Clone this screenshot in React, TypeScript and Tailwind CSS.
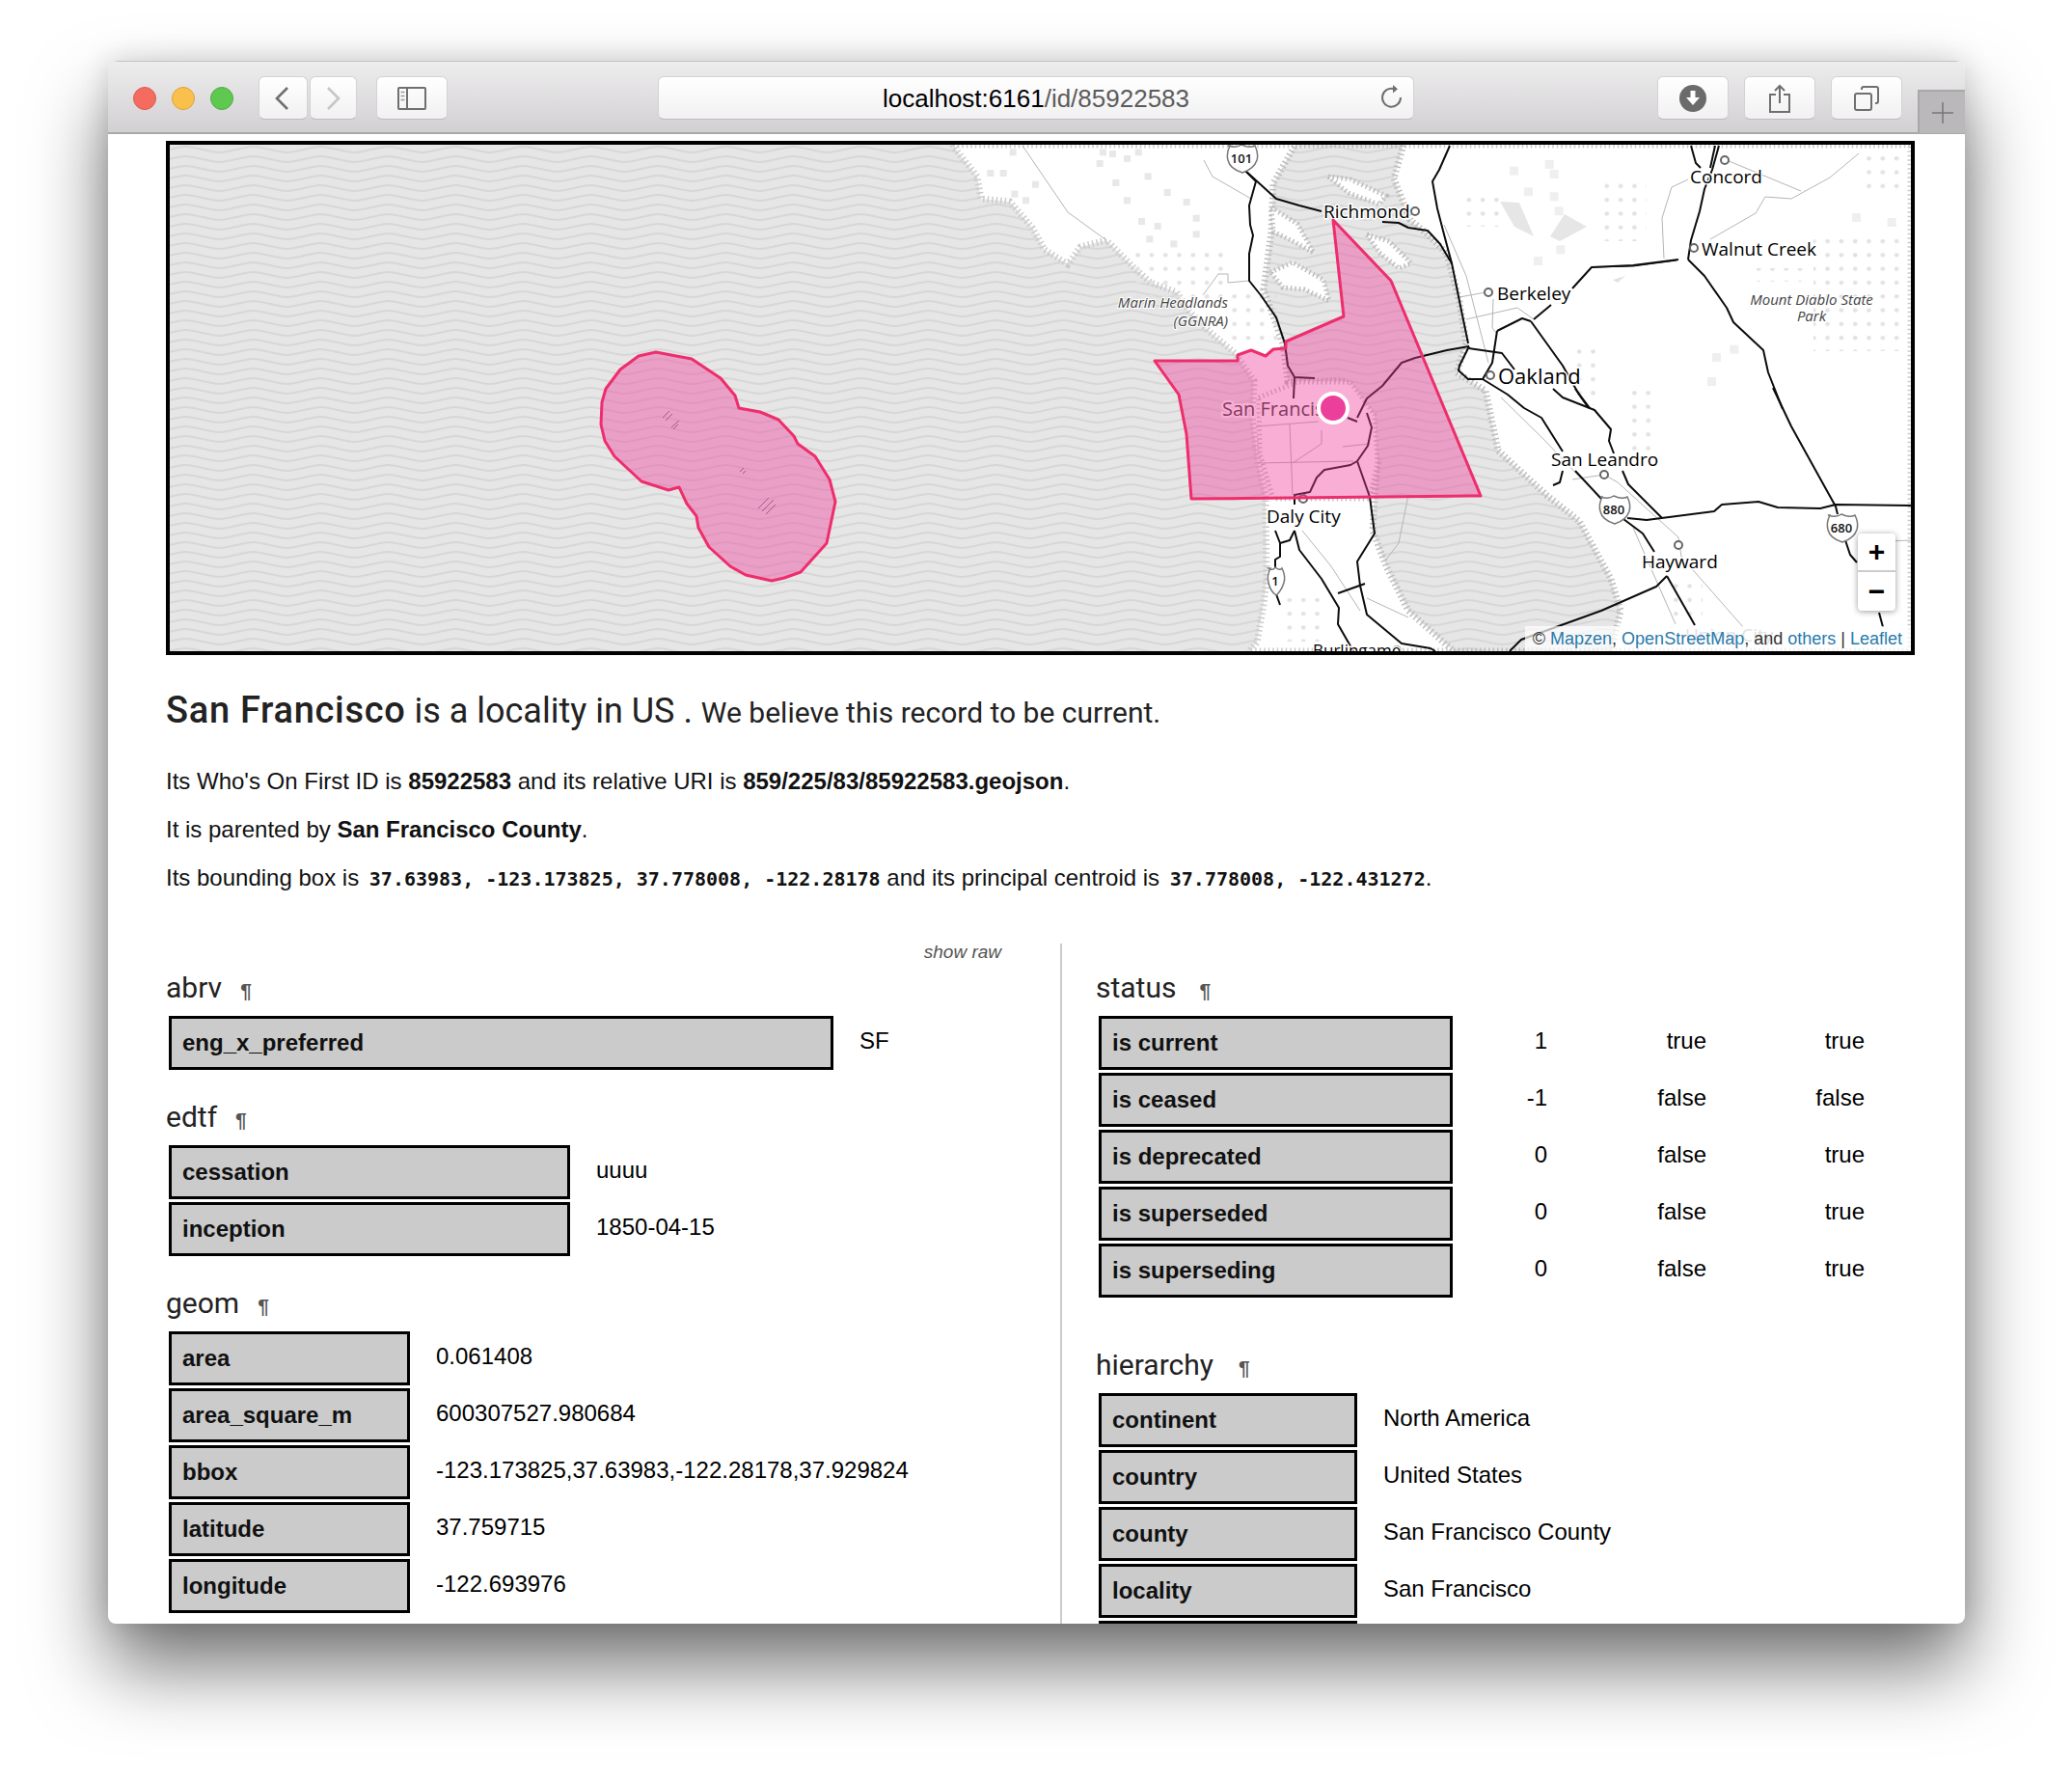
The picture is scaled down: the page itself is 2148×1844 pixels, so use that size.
import type { ReactNode } from "react";

const ROADS = [
  "1290,176 1302,188 1295,213 1296,233 1299,244 1295,263 1295,291 1307,306 1323,329 1332,356 1335,379 1342,391 1363,392",
  "1342,391 1341,413",
  "1290,176 1323,206 1347,213 1370,219",
  "1433,230 1450,231 1460,236 1480,239 1493,253 1505,273 1522,356",
  "1503,151 1492,176 1485,188 1490,216 1497,243 1505,273",
  "1523,359 1500,363 1467,371 1453,376 1433,400 1417,413 1410,427 1407,433",
  "1397,433 1407,437",
  "1417,428 1422,443 1418,462 1407,478 1400,482 1373,487 1365,495 1358,510 1342,513 1342,523",
  "1407,478 1420,515 1425,553 1407,582 1410,607 1417,637 1453,667 1483,672 1488,675",
  "1342,550 1347,570 1370,600 1388,630 1387,647 1403,675",
  "1342,550 1337,560 1327,563 1322,550",
  "1327,563 1327,577 1322,580 1322,590",
  "1322,613 1327,627",
  "1387,615 1415,605",
  "1523,359 1513,379 1512,384 1522,393 1537,393 1563,409 1580,423 1598,433 1620,468",
  "1633,488 1660,517",
  "1523,361 1557,366 1570,383",
  "1587,333 1620,379 1637,409 1647,423",
  "1552,343 1578,330 1587,333",
  "1552,343 1547,376 1537,393",
  "1590,331 1608,316",
  "1630,299 1650,277 1693,275 1740,269",
  "1610,403 1620,412 1653,425 1670,445 1668,457 1673,470",
  "1633,403 1648,423",
  "1682,488 1688,502 1723,537",
  "1620,488 1617,500 1610,503",
  "1683,538 1703,553 1715,572",
  "1687,537 1707,539 1777,530 1785,523 1823,520 1843,526 1887,527 1903,523 1981,524",
  "1838,402 1857,442 1893,507 1903,525 1905,533",
  "1750,269 1767,286 1790,319 1797,334 1828,363 1833,386 1848,424",
  "1750,269 1753,249 1762,219 1767,196 1775,176 1782,151",
  "1753,151 1758,169 1763,174",
  "1778,151 1773,174",
  "1913,560 1918,575 1925,583",
  "1948,635 1952,650",
  "1728,597 1757,648",
  "1728,597 1717,608 1660,633 1577,663 1565,675",
];

const THIN_ROADS = [
  "1060,151 1107,220 1147,249",
  "1248,166 1257,183 1297,206",
  "1247,306 1263,284 1273,284 1273,293 1295,291",
  "1927,159 1897,184 1857,206 1830,204 1820,221 1773,248",
  "1790,166 1867,198",
  "1750,186 1733,194 1723,226 1725,268",
  "1513,308 1540,303",
  "1520,331 1573,319 1590,331",
  "1497,233 1520,286 1543,376",
  "1548,310 1547,340 1552,346",
  "1302,442 1367,437",
  "1337,440 1340,513",
  "1304,480 1403,478",
  "1370,446 1370,460 1340,480",
  "1392,463 1420,460",
  "1350,550 1380,587 1410,633",
  "1460,513 1450,563 1437,580",
  "1677,500 1740,557 1743,577 1807,650",
  "1630,497 1663,492 1677,500",
  "1693,547 1737,647",
  "1930,562 1981,560",
  "1556,412 1600,455 1640,497",
  "1417,620 1460,640",
];

const SQUARES_NW = [
  [200, 25], [480, 25], [510, 30], [555, 45], [590, 25], [470, 60], [520, 120], [555, 175], [130, 90], [170, 90],
  [205, 155], [240, 175], [270, 125], [600, 240], [650, 255], [625, 295], [700, 310], [770, 230], [770, 280],
  [620, 100], [680, 150], [740, 180],
];

const SQUARES_NE = [
  [255, 80], [365, 60], [380, 90], [300, 145], [380, 160], [395, 205], [400, 325], [330, 360], [885, 660], [870, 735],
  [940, 635], [1320, 225], [1430, 240],
];

const LAND =
  "987,150 1013,183 1017,206 1047,209 1070,236 1083,259 1107,274 1120,256 1147,249 1177,279 1193,293 1220,303 1233,323 1253,343 1280,366 1300,395 1298,433 1304,480 1312,515 1313,600 1310,626 1303,666 1295,675 1981,675 1981,150";

const BAY =
  "1343,150 1455,150 1445,185 1462,228 1480,243 1500,263 1513,313 1520,356 1510,386 1540,405 1553,467 1603,513 1637,540 1670,600 1680,633 1670,675 1507,675 1460,633 1437,587 1423,550 1425,517 1428,480 1418,430 1395,395 1335,395 1330,356 1310,300 1318,240 1320,190";

const SF_LAND = "1305,412 1345,396 1400,396 1425,430 1428,480 1420,517 1320,517 1306,470";

const SF =
  "1382,228 1442,291 1535,514 1235,517 1230,450 1222,409 1197,374 1283,374 1283,368 1297,363 1312,369 1320,362 1333,361 1333,354 1393,328";

const BLOB =
  "680,365 717,372 747,392 762,410 766,423 788,427 807,435 823,452 827,460 845,473 860,497 866,520 857,563 830,593 813,599 800,602 773,596 757,587 735,567 724,547 722,535 712,522 704,505 693,508 665,499 637,473 627,457 623,440 624,417 628,403 643,383 662,369";

const ISLANDS = [
  "1317,282 1340,272 1372,290 1378,312 1352,300 1330,298",
  "1377,183 1400,186 1437,203 1430,212 1398,200",
  "1417,243 1440,250 1463,273 1450,278 1430,262",
  "1318,215 1345,232 1362,262 1340,250 1320,240",
];

const PLACES: [string, number, number, number, number, number][] = [
  ["Richmond", 1372, 226, 19, 1467, 219],
  ["Concord", 1752, 190, 19, 1788, 166],
  ["Walnut Creek", 1764, 265, 19, 1756, 257],
  ["Berkeley", 1552, 311, 19, 1543, 303],
  ["Oakland", 1553, 398, 22, 1545, 389],
  ["San Leandro", 1608, 483, 19, 1663, 492],
  ["Hayward", 1702, 589, 19, 1740, 565],
  ["Daly City", 1313, 542, 19, 1351, 517],
  ["Burlingame", 1361, 680, 17, 1448, 674],
];

function Shield({ x, y, label, w = 34 }: { x: number; y: number; label: string; w?: number }) {
  const h = w / 2;
  return (
    <g>
      <path
        d={`M${x - h + 3} ${y - 13} q${h / 2} 3 ${h - 3} -1 q${h / 2} 4 ${h - 3} 1 q4 8 2 15 q-3 9 -${h - 2} 13 q-${h - 4} -4 -${h - 2} -13 q-2 -7 2 -15 z`}
        fill="white"
        stroke="#777"
        strokeWidth="1.5"
      />
      <text x={x} y={y + 5} textAnchor="middle" className="font-['Open_Sans',sans-serif] text-[13px] font-semibold" fill="#111">
        {label}
      </text>
    </g>
  );
}

function MapView() {
  return (
    <div className="relative h-[533px] w-[1813px] overflow-hidden border-4 border-black">
      <svg width="1805" height="525" viewBox="176 150 1805 525" className="block">
        <defs>
          <pattern id="waves" width="70" height="10" patternUnits="userSpaceOnUse">
            <rect width="70" height="10" fill="#e6e6e6" />
            <path d="M-35 5 C-18 1 -17 1 0 5 S18 9 35 5 S53 1 70 5 S88 9 105 5" fill="none" stroke="#d7d7d7" strokeWidth="2" />
          </pattern>
          <pattern id="dots" width="14.3" height="14.3" patternUnits="userSpaceOnUse">
            <circle cx="7" cy="7" r="2.3" fill="#e2e2e2" />
          </pattern>
        </defs>
        <rect x="176" y="150" width="1805" height="525" fill="url(#waves)" />
        <polygon points={LAND} fill="white" />
        <polygon points={LAND} fill="none" stroke="#cbcbcb" strokeWidth="7" strokeDasharray="1.5 3" />
        <polygon points={BAY} fill="url(#waves)" />
        <polygon points={BAY} fill="none" stroke="#bcbcbc" strokeWidth="7" strokeDasharray="1.5 3" />
        {ISLANDS.map((p) => (
          <polygon key={p} points={p} fill="white" stroke="#bdbdbd" strokeWidth="5" strokeDasharray="1.5 3" />
        ))}
        <polygon points={SF_LAND} fill="white" stroke="#c4c4c4" strokeWidth="5" strokeDasharray="1.5 3" />

        <rect x="1172" y="258" width="105" height="60" fill="url(#dots)" />
        <rect x="1270" y="300" width="60" height="56" fill="url(#dots)" />
        <rect x="1663" y="190" width="44" height="60" fill="url(#dots)" />
        <rect x="1515" y="205" width="42" height="30" fill="url(#dots)" />
        <rect x="1880" y="246" width="90" height="118" fill="url(#dots)" />
        <rect x="1815" y="278" width="60" height="14" fill="url(#dots)" />
        <rect x="1632" y="360" width="30" height="60" fill="url(#dots)" />
        <rect x="1330" y="620" width="45" height="45" fill="url(#dots)" />
        <rect x="1725" y="600" width="40" height="40" fill="url(#dots)" />
        <rect x="1690" y="405" width="30" height="70" fill="url(#dots)" />
        <rect x="1930" y="160" width="44" height="44" fill="url(#dots)" />

        {SQUARES_NW.map(([x, y]) => (
          <rect key={`${x}-${y}`} x={980 + x / 3} y={146 + y / 3} width="7" height="7" fill="#e8e8e8" />
        ))}
        {SQUARES_NE.map(([x, y]) => (
          <rect key={`${x}-${y}`} x={1480 + x / 3} y={146 + y / 3} width="9" height="9" fill="#efefef" />
        ))}
        <polygon points="1555,209 1575,210 1590,245 1570,235" fill="#e6e6e6" />
        <polygon points="1607,245 1622,222 1645,235 1617,250" fill="#e6e6e6" />
        <polygon points="1672,290 1685,286 1677,293" fill="#e2e2e2" />

        {THIN_ROADS.map((p) => (
          <polyline key={p} points={p} fill="none" stroke="#b5b5b5" strokeWidth="1" />
        ))}
        {ROADS.map((p) => (
          <polyline key={p} points={p} fill="none" stroke="#0c0c0c" strokeWidth="2" strokeLinejoin="round" />
        ))}
        <polyline points="1650,277 1693,276 1738,270" fill="none" stroke="#0c0c0c" strokeWidth="1" />

        <text x="1747" y="665" className="font-['Open_Sans',sans-serif] text-[19px]" fill="#999">
          Union City
        </text>
        <text x="1267" y="431" className="font-['Open_Sans',sans-serif] text-[20px]" fill="#333" stroke="white" strokeWidth="4" paintOrder="stroke">
          San Francisco
        </text>
        {PLACES.map(([name, x, y, size, cx, cy]) => (
          <g key={name}>
            <circle cx={cx} cy={cy} r="4" fill="white" stroke="#666" strokeWidth="2" />
            <text x={x} y={y} fontSize={size} className="font-['Open_Sans',sans-serif]" fill="#000" stroke="white" strokeWidth="3" paintOrder="stroke">
              {name}
            </text>
          </g>
        ))}
        <g className="font-['Open_Sans',sans-serif] text-[15px] italic" fill="#444" stroke="white" strokeWidth="2" paintOrder="stroke">
          <text x="1273" y="319" textAnchor="end">
            Marin Headlands
          </text>
          <text x="1273" y="338" textAnchor="end">
            (GGNRA)
          </text>
          <text x="1878" y="316" textAnchor="middle">
            Mount Diablo State
          </text>
          <text x="1878" y="333" textAnchor="middle">
            Park
          </text>
        </g>
        <Shield x={1287} y={164} label="101" />
        <Shield x={1673} y={528} label="880" />
        <Shield x={1909} y={547} label="680" />
        <Shield x={1322} y={602} label="1" w={20} />

        <polygon points={SF} fill="#f0409a" fillOpacity="0.42" stroke="#ee2d6c" strokeWidth="3" strokeLinejoin="round" />
        <polygon points={BLOB} fill="#f0409a" fillOpacity="0.42" stroke="#ee2d6c" strokeWidth="3" strokeLinejoin="round" />
        <g stroke="#9a5a85" strokeWidth="1">
          <path d="M687 433 L694 426 M690 436 L697 429 M696 443 L704 436 M698 445 L703 440" />
          <path d="M767 489 L771 485 M770 491 L773 488" />
          <path d="M786 527 L797 516 M790 530 L802 518 M794 533 L804 523" />
        </g>
        <circle cx="1382" cy="423" r="15" fill="#ec3f9b" stroke="white" strokeWidth="4" />
      </svg>

      <div className="absolute top-[403px] left-[1750px] flex w-[39px] flex-col rounded-[4px] bg-white shadow-[0_1px_6px_rgba(0,0,0,0.4)]">
        <div className="flex h-10 items-center justify-center border-b-2 border-[#ccc] font-['Liberation_Sans',sans-serif] text-[30px] leading-none font-bold text-black">
          +
        </div>
        <div className="flex h-10 items-center justify-center font-['Liberation_Sans',sans-serif] text-[30px] leading-none font-bold text-black">
          −
        </div>
      </div>
      <div className="absolute right-0 bottom-0 h-[26px] bg-white/70 pr-[9px] pl-2 font-['Liberation_Sans',sans-serif] text-[18px] leading-[26px] text-[#333]">
        © <span className="text-[#2a7bac]">Mapzen</span>, <span className="text-[#2a7bac]">OpenStreetMap</span>, and{" "}
        <span className="text-[#2a7bac]">others</span> | <span className="text-[#2a7bac]">Leaflet</span>
      </div>
    </div>
  );
}

function Toolbar() {
  const btn =
    "flex h-[45px] items-center justify-center rounded-[6px] border border-[#d4d2d4] border-b-[#bdbbbd] bg-linear-to-b from-white to-[#f2f1f2]";
  return (
    <div className="flex h-[76px] shrink-0 items-start border-t border-b-2 border-t-[#c4c4c4] border-b-[#a9a9a9] bg-linear-to-b from-[#eeedee] to-[#d2d0d2] pt-[15px] pl-[26px]">
      <div className="flex h-[45px] items-center gap-4">
        <div className="h-6 w-6 rounded-full border border-[#df5a50] bg-[#f46b60]" />
        <div className="h-6 w-6 rounded-full border border-[#dea238] bg-[#f9c14c]" />
        <div className="h-6 w-6 rounded-full border border-[#4fae43] bg-[#5fc850]" />
      </div>
      <div className={`${btn} ml-[26px] w-[51px] pr-1`}>
        <svg width="16" height="24" viewBox="0 0 16 24" fill="none" stroke="#6f6f6f" strokeWidth="2.6">
          <path d="M14 1 L3 12 L14 23" />
        </svg>
      </div>
      <div className={`${btn} ml-[2px] w-[49px]`}>
        <svg width="16" height="24" viewBox="0 0 16 24" fill="none" stroke="#c6c6c6" strokeWidth="2.6">
          <path d="M2 1 L13 12 L2 23" />
        </svg>
      </div>
      <div className={`${btn} ml-5 w-[74px]`}>
        <svg width="30" height="24" viewBox="0 0 30 24" fill="none" stroke="#6f6f6f" strokeWidth="2">
          <rect x="1" y="1" width="28" height="22" rx="1" />
          <path d="M10 1 V23" />
          <path d="M3.5 5.5 H7.5 M3.5 9.5 H7.5 M3.5 13.5 H7.5" strokeWidth="1.6" stroke="#9a9a9a" />
        </svg>
      </div>
      <div className={`${btn} relative ml-[218px] w-[784px] pt-[2px] font-['Liberation_Sans',sans-serif] text-[26px] text-black`}>
        <span>
          localhost:6161<span className="text-[#5c5c5c]">/id/85922583</span>
        </span>
        <svg className="absolute top-[7px] right-[10px]" width="24" height="26" viewBox="0 0 24 26" fill="none" stroke="#6f6f6f" strokeWidth="2">
          <path d="M14 5 A9.5 9.5 0 1 0 21 14" />
          <path d="M13 1 L18 5.2 L13 9.5 Z" fill="#6f6f6f" stroke="none" />
        </svg>
      </div>
      <div className={`${btn} ml-[252px] w-[74px]`}>
        <svg width="28" height="28" viewBox="0 0 28 28">
          <circle cx="14" cy="14" r="14" fill="#6b6b6b" />
          <path d="M11.5 6 H16.5 V13 H21 L14 21 L7 13 H11.5 Z" fill="white" />
        </svg>
      </div>
      <div className={`${btn} ml-4 w-[74px]`}>
        <svg width="24" height="30" viewBox="0 0 24 30" fill="none" stroke="#6f6f6f" strokeWidth="2">
          <path d="M8 11 H2 V29 H22 V11 H16" />
          <path d="M12 20 V2 M7 7 L12 2 L17 7" />
        </svg>
      </div>
      <div className={`${btn} ml-4 w-[74px]`}>
        <svg width="26" height="26" viewBox="0 0 26 26" fill="none" stroke="#6f6f6f" strokeWidth="2">
          <rect x="1" y="8" width="17" height="17" rx="2" />
          <path d="M8 4 V3 Q8 1 10 1 H23 Q25 1 25 3 V16 Q25 18 23 18 H22" />
        </svg>
      </div>
      <div className="mt-[14px] ml-4 flex h-[45px] w-[49px] items-center justify-center border-t-2 border-l-2 border-[#a8a8a8] bg-[#bab8ba]">
        <svg width="24" height="24" viewBox="0 0 24 24" stroke="#777" strokeWidth="1.5">
          <path d="M12 1 V23 M1 12 H23" />
        </svg>
      </div>
    </div>
  );
}

function Heading({ children, gap = 19 }: { children: ReactNode; gap?: number }) {
  return (
    <h3 className="flex h-10 items-center font-['Roboto',sans-serif] text-[30px] leading-10 font-normal text-[#222]">
      {children}
      <span style={{ marginLeft: gap }} className="mt-[4px] font-['Liberation_Sans',sans-serif] text-[21px] leading-none font-bold text-[#555]">
        ¶
      </span>
    </h3>
  );
}

function KeyRow({ label, value, width }: { label: string; value: string; width: string }) {
  return (
    <div className="flex h-14 items-center">
      <div className={`flex h-14 shrink-0 items-center border-[3px] border-black bg-[#cbcbcb] pl-[11px] text-[24px] font-bold text-[#111] ${width}`}>
        {label}
      </div>
      <div className="ml-[27px] pb-1 text-[24px] text-black">{value}</div>
    </div>
  );
}

function KeyTable({ rows, width }: { rows: [string, string][]; width: string }) {
  return (
    <div className="mt-[9px] flex flex-col gap-[3px] pl-[3px]">
      {rows.map(([k, v]) => (
        <KeyRow key={k} label={k} value={v} width={width} />
      ))}
    </div>
  );
}

const STATUS: [string, string, string, string][] = [
  ["is current", "1", "true", "true"],
  ["is ceased", "-1", "false", "false"],
  ["is deprecated", "0", "false", "true"],
  ["is superseded", "0", "false", "true"],
  ["is superseding", "0", "false", "true"],
];

export default function App() {
  return (
    <div className="h-[1844px] overflow-hidden bg-white pt-[63px] pl-[112px] font-['Liberation_Sans',sans-serif]">
      <div className="flex h-[1620px] w-[1925px] flex-col overflow-hidden rounded-[10px] rounded-b-[8px] bg-white shadow-[0_45px_80px_rgba(0,0,0,0.55),0_0_30px_rgba(0,0,0,0.15)]">
        <Toolbar />
        <div className="min-h-0 flex-1 overflow-hidden pt-[7px] pl-[60px]">
          <MapView />

          <h2 className="mt-[35px] font-['Roboto',sans-serif] text-[36px] leading-[44px] text-[#222]">
            <span className="text-[38px] font-medium tracking-[0.7px]">San Francisco</span> is a locality in US .{" "}
            <span className="text-[30px]">We believe this record to be current.</span>
          </h2>

          <div className="mt-[34px] flex flex-col gap-5 text-[24px] leading-[30px] text-[#111]">
            <p>
              Its Who's On First ID is <strong>85922583</strong> and its relative URI is <strong>859/225/83/85922583.geojson</strong>.
            </p>
            <p>
              It is parented by <strong>San Francisco County</strong>.
            </p>
            <p>
              Its bounding box is <code className="ml-1 font-['DejaVu_Sans_Mono',monospace] text-[20px] font-bold">37.63983, -123.173825, 37.778008, -122.28178</code>{" "}
              and its principal centroid is <code className="ml-1 font-['DejaVu_Sans_Mono',monospace] text-[20px] font-bold">37.778008, -122.431272</code>.
            </p>
          </div>

          <div className="mt-[52px] flex">
            <div className="h-[800px] w-[929px] shrink-0 border-r-2 border-[#ccc]">
              <div className="h-[26px] pr-[61px] text-right text-[19px] leading-[18px] text-[#555] italic">show raw</div>
              <Heading>abrv</Heading>
              <KeyTable rows={[["eng_x_preferred", "SF"]]} width="w-[689px]" />
              <div className="mt-[29px]">
                <Heading>edtf</Heading>
                <KeyTable
                  rows={[
                    ["cessation", "uuuu"],
                    ["inception", "1850-04-15"],
                  ]}
                  width="w-[416px]"
                />
              </div>
              <div className="mt-[29px]">
                <Heading>geom</Heading>
                <KeyTable
                  rows={[
                    ["area", "0.061408"],
                    ["area_square_m", "600307527.980684"],
                    ["bbox", "-123.173825,37.63983,-122.28178,37.929824"],
                    ["latitude", "37.759715"],
                    ["longitude", "-122.693976"],
                  ]}
                  width="w-[250px]"
                />
              </div>
            </div>

            <div className="pl-[35px]">
              <div className="h-[26px]" />
              <Heading gap={24}>status</Heading>
              <div className="mt-[9px] flex flex-col gap-[3px] pl-[3px]">
                {STATUS.map(([k, a, b, c]) => (
                  <div key={k} className="flex h-14 items-center text-[24px] text-black">
                    <div className="flex h-14 w-[367px] shrink-0 items-center border-[3px] border-black bg-[#cbcbcb] pl-[11px] text-[24px] font-bold text-[#111]">
                      {k}
                    </div>
                    <div className="w-[98px] pb-1 text-right">{a}</div>
                    <div className="w-[165px] pb-1 text-right">{b}</div>
                    <div className="w-[164px] pb-1 text-right">{c}</div>
                  </div>
                ))}
              </div>
              <div className="mt-[50px]">
                <Heading gap={26}>hierarchy</Heading>
                <KeyTable
                  rows={[
                    ["continent", "North America"],
                    ["country", "United States"],
                    ["county", "San Francisco County"],
                    ["locality", "San Francisco"],
                    ["region", "California"],
                  ]}
                  width="w-[268px]"
                />
              </div>
            </div>
          </div>
        </div>
      </div>
    </div>
  );
}
